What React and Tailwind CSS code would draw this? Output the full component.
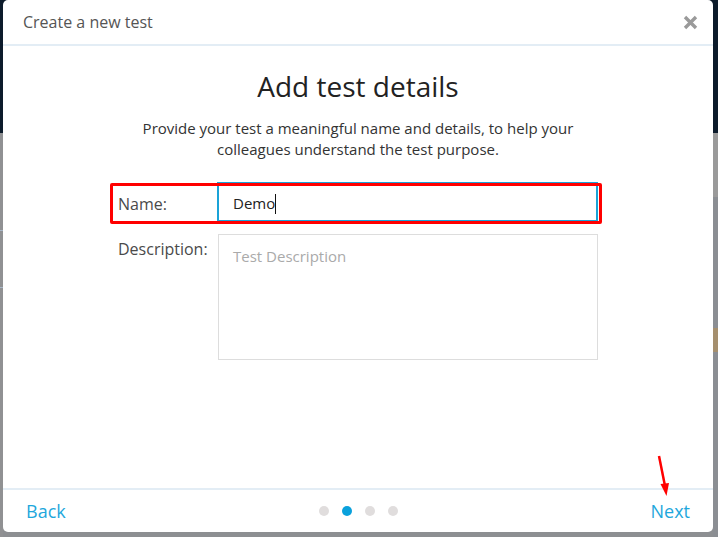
import React from "react";

export default function App() {
  const font = { fontFamily: '"Open Sans", "Noto Sans", sans-serif' };
  return (
    <div className="relative w-[718px] h-[537px] overflow-hidden bg-[#8d8f92]" style={font}>
      {/* backdrop */}
      <div className="flex flex-col h-full">
        <div className="h-[133px] bg-[#0c1b2b] relative">
          <div className="absolute left-[437px] top-0 w-[103px] h-[2px] bg-[#1a7fa8]" />
        </div>
        <div className="flex-1 flex">
          <div className="w-[3px] flex flex-col">
            <div className="h-[97px] bg-[#909193]" />
            <div className="h-[1px] bg-[#a8b7c8]" />
            <div className="h-[56px] bg-[#909193]" />
            <div className="h-[1px] bg-[#a8b7c8]" />
            <div className="flex-1 bg-[#909193]" />
          </div>
          <div className="flex-1" />
          <div className="w-[5px] flex flex-col">
            <div className="h-[64px] bg-[#9a9a9a]" />
            <div className="h-[131px] bg-[#8b8e93]" />
            <div className="h-[24px] bg-[#a58f6e]" />
            <div className="flex-1 bg-[#8b8e93]" />
          </div>
        </div>
      </div>

      {/* modal */}
      <div className="absolute left-[3px] top-0 w-[710px] h-[532px] bg-white rounded-[5px] flex flex-col">
        <div className="h-[44px] flex items-center justify-between pl-[20px] pr-[15px] border-b-2 border-[#e3edf5] box-content">
          <span className="text-[16px] text-[#555555]">Create a new test</span>
          <svg width="15" height="15" viewBox="0 0 15 15">
            <path d="M2 2 L13 13 M13 2 L2 13" stroke="#9a9a9a" strokeWidth="3.4" strokeLinecap="butt" />
          </svg>
        </div>

        <div className="flex-1 flex flex-col items-center pt-[21px]">
          <h1 className="text-[28px] leading-[38px] text-[#222222] font-normal">Add test details</h1>
          <p className="mt-[13px] w-[450px] text-center text-[15px] leading-[21px] text-[#333333]">
            Provide your test a meaningful name and details, to help your colleagues understand the test purpose.
          </p>

          <div className="mt-[22px] w-[480px] flex flex-col gap-[12px]">
            <div className="relative flex items-center h-[40px]">
              <label className="w-[99px] pt-[3px] text-[16px] text-[#4a4a4a]">Name:</label>
              <div className="flex-1 h-[40px] border-2 border-[#1aa3d8] flex items-center pt-[3px] pl-[14px] text-[15px] text-[#222222]">
                <span>Demo</span>
                <span className="w-[1px] h-[20px] bg-[#111111]" />
              </div>
              <div className="absolute -left-[8px] -right-[4px] top-[1px] bottom-[-2px] border-[3px] border-[#ff0000] rounded-[2px] pointer-events-none" />
            </div>

            <div className="flex">
              <label className="w-[100px] pt-[4px] text-[16px] leading-[22px] text-[#4a4a4a]">Description:</label>
              <div className="w-[380px] h-[126px] border border-[#dddddd] pl-[14px] pt-[11px] text-[15px] leading-[21px] text-[#aaaaaa]">
                Test Description
              </div>
            </div>
          </div>
        </div>

        <div className="h-[42px] border-t-2 border-[#e3edf5] flex items-center justify-between pl-[23px] pr-[23px] box-content">
          <span className="text-[18px] text-[#1ea7dc]">Back</span>
          <div className="flex items-center gap-[13px]">
            <span className="w-[10px] h-[10px] rounded-full bg-[#e0dddd]" />
            <span className="w-[10px] h-[10px] rounded-full bg-[#0aa1dc]" />
            <span className="w-[10px] h-[10px] rounded-full bg-[#e0dddd]" />
            <span className="w-[10px] h-[10px] rounded-full bg-[#e0dddd]" />
          </div>
          <span className="text-[18px] text-[#1ea7dc]">Next</span>
        </div>
      </div>

      {/* annotation arrow */}
      <svg className="absolute left-[650px] top-[450px]" width="30" height="50" viewBox="0 0 30 50">
        <path d="M9 6 L15 36" stroke="#ff0000" strokeWidth="2.5" />
        <path d="M10.5 34 L19 33 L16.5 46 Z" fill="#ff0000" />
      </svg>
    </div>
  );
}
